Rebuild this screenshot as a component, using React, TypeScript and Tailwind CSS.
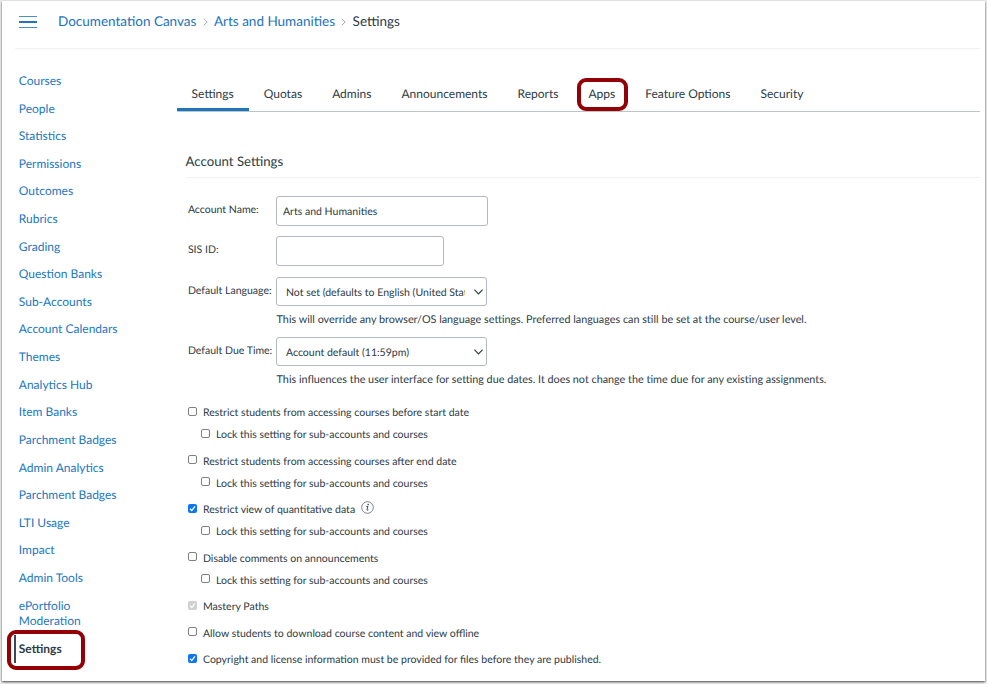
import { Fragment } from 'react';

import clsx from 'clsx';

const crumbs = ['Documentation Canvas', 'Arts and Humanities'];

const navItems = [
    'Courses',
    'People',
    'Statistics',
    'Permissions',
    'Outcomes',
    'Rubrics',
    'Grading',
    'Question Banks',
    'Sub-Accounts',
    'Account Calendars',
    'Themes',
    'Analytics Hub',
    'Item Banks',
    'Parchment Badges',
    'Admin Analytics',
    'Parchment Badges',
    'LTI Usage',
    'Impact',
    'Admin Tools',
    'ePortfolio Moderation',
    'Settings',
];

const tabs = [
    'Settings',
    'Quotas',
    'Admins',
    'Announcements',
    'Reports',
    'Apps',
    'Feature Options',
    'Security',
];

interface Option {
    label: string;
    checked?: boolean;
    disabled?: boolean;
    info?: boolean;
    lockable?: boolean;
}

const options: Option[] = [
    { label: 'Restrict students from accessing courses before start date', lockable: true },
    { label: 'Restrict students from accessing courses after end date', lockable: true },
    { label: 'Restrict view of quantitative data', checked: true, info: true, lockable: true },
    { label: 'Disable comments on announcements', lockable: true },
    { label: 'Mastery Paths', checked: true, disabled: true },
    { label: 'Allow students to download course content and view offline' },
    {
        label: 'Copyright and license information must be provided for files before they are published.',
        checked: true,
    },
];

function Checkbox({ checked, disabled }: { checked?: boolean; disabled?: boolean }) {
    return (
        <span
            className={clsx(
                'mb-[2px] flex size-[9px] shrink-0 items-center justify-center rounded-[2px]',
                !checked && 'border border-[#808080] bg-white',
                checked && !disabled && 'bg-[#0a75f5]',
                checked && disabled && 'bg-[#cfcfcf]'
            )}
        >
            {checked && (
                <svg viewBox="0 0 9 9" className="size-[9px]" fill="none">
                    <path d="M2 4.8 L3.8 6.6 L7 2.3" stroke="white" strokeWidth="1.3" />
                </svg>
            )}
        </span>
    );
}

function InfoIcon() {
    return (
        <svg viewBox="0 0 13 13" className="mb-[4px] ml-[6px] size-[13px]" fill="none">
            <circle cx="6.5" cy="6.5" r="5.8" stroke="#5a6670" strokeWidth="0.8" />
            <circle cx="7.2" cy="3.6" r="0.75" fill="#2d3b45" />
            <path
                d="M5.3 5.6 L6.9 5.3 L6 8.9 Q5.9 9.7 7.4 8.8"
                stroke="#2d3b45"
                strokeWidth="0.9"
            />
        </svg>
    );
}

function Row({ label, children }: { label: string; children: React.ReactNode }) {
    return (
        <div className="flex">
            <div className="w-[88.1px] shrink-0 pt-[7px] leading-[14px] whitespace-nowrap">{label}</div>
            {children}
        </div>
    );
}

function Select({ value }: { value: string }) {
    return (
        <div className="flex h-[29px] w-[211px] items-center rounded-[3px] border border-[#b3b9bf] pr-[3px] pl-[9px]">
            <span className="w-[179px] shrink-0 overflow-hidden pt-[4px] whitespace-nowrap">{value}</span>
            <svg viewBox="0 0 9 6" className="ml-auto h-[6px] w-[9px]" fill="none">
                <path d="M0.4 0.6 L4.5 4.9 L8.6 0.6" stroke="#2d3b45" strokeWidth="1.1" />
            </svg>
        </div>
    );
}

export default function App() {
    return (
        <div className="h-[684px] w-[987px] overflow-hidden bg-[#ececec] pt-px pl-[2px] font-['Lato',sans-serif] text-[10.53px] text-[#2d3b45] [text-rendering:geometricPrecision]">
            <div className="h-[680px] w-[983px] bg-white shadow-[0_1px_2px_rgba(0,0,0,0.7)]">
                <header className="ml-[13px] flex h-[48px] w-[965px] items-center border-b border-[#f0f1f2] pb-[7px] pl-[4px] text-[13.5px]">
                    <div className="mt-[2px] mr-[21px] flex w-[18px] flex-col gap-[4.3px]">
                        <span className="h-[1.4px] bg-[#4a8fcb]" />
                        <span className="h-[1.4px] bg-[#2573b8]" />
                        <span className="h-[1.4px] bg-[#4a8fcb]" />
                    </div>
                    {crumbs.map((crumb) => (
                        <Fragment key={crumb}>
                            <a className="text-[#1c72bd]">{crumb}</a>
                            <svg viewBox="0 0 5 8" className="mx-[6.3px] mt-[2px] h-[8px] w-[5px]" fill="none">
                                <path d="M0.7 0.7 L4.2 4 L0.7 7.3" stroke="#98a0a6" strokeWidth="0.9" />
                            </svg>
                        </Fragment>
                    ))}
                    <span>Settings</span>
                </header>

                <div className="flex">
                    <nav className="w-[174.6px] shrink-0 pt-[18px] pl-[12px] text-[12px]">
                        {navItems.map((item, index) => (
                            <div
                                key={index}
                                className={clsx(
                                    'relative w-[110px] py-[6px] pl-[4.8px] leading-[15.61px]',
                                    item === 'Settings' ? 'font-bold' : 'text-[#2277bf]'
                                )}
                            >
                                <span className="block w-[104px]">{item}</span>
                                {item === 'Settings' && (
                                    <>
                                        <span className="absolute top-0 left-0 h-[28px] w-[2px] bg-[#3c4852]" />
                                        <span className="absolute -top-[5px] -left-[7px] h-[40px] w-[78px] rounded-[9px] border-4 border-[#930006]" />
                                    </>
                                )}
                            </div>
                        ))}
                    </nav>

                    <main className="w-[803.4px] pt-[27px]">
                        <div className="flex h-[36px] border-b border-[#bfc4c8] text-[12px]">
                            {tabs.map((tab, index) => (
                                <div
                                    key={tab}
                                    className={clsx(
                                        'relative h-[35px] px-[15.02px] pt-[9px] leading-[17px]',
                                        index === 0 && 'border-b-3 border-[#1f76bd]'
                                    )}
                                >
                                    {tab}
                                    {tab === 'Apps' && (
                                        <span className="absolute top-[2px] left-[3.6px] h-[33px] w-[51px] rounded-[9px] border-4 border-[#930006]" />
                                    )}
                                </div>
                            ))}
                        </div>

                        <section className="pl-[9px]">
                            <h2 className="h-[66px] border-b border-[#f0f1f2] pt-[40px] text-[13.2px] leading-[18px]">
                                Account Settings
                            </h2>

                            <div className="pt-[18px] pl-[2.3px]">
                                <Row label="Account Name:">
                                    <div className="flex h-[30px] w-[212px] items-center rounded-[3px] border border-[#b3b9bf] px-[6px] pt-[3px]">
                                        Arts and Humanities
                                    </div>
                                </Row>
                                <div className="h-[10px]" />
                                <Row label="SIS ID:">
                                    <div className="h-[30px] w-[168px] rounded-[3px] border border-[#b3b9bf]" />
                                </Row>
                                <div className="h-[11px]" />
                                <Row label="Default Language:">
                                    <div>
                                        <Select value="Not set (defaults to English (United States))" />
                                        <p className="pt-[6px] pl-[0.6px] text-[10.8px] leading-[16px]">
                                            This will override any browser/OS language settings. Preferred
                                            languages can still be set at the course/user level.
                                        </p>
                                    </div>
                                </Row>
                                <div className="h-[9px]" />
                                <Row label="Default Due Time:">
                                    <div>
                                        <Select value="Account default (11:59pm)" />
                                        <p className="pt-[6px] pl-[0.6px] text-[10.8px] leading-[16px]">
                                            This influences the user interface for setting due dates. It does
                                            not change the time due for any existing assignments.
                                        </p>
                                    </div>
                                </Row>
                            </div>

                            <div className="pt-[16.4px] pl-[2.2px] leading-[16px]">
                                {options.map((option) => (
                                    <div key={option.label} className="mb-[10.5px]">
                                        <div className="flex h-[16px] items-center">
                                            <Checkbox checked={option.checked} disabled={option.disabled} />
                                            <span className="pt-[2px] pl-[6.2px]">{option.label}</span>
                                            {option.info && <InfoIcon />}
                                        </div>
                                        {option.lockable && (
                                            <div className="mt-[6px] flex h-[16px] items-center pl-[13px]">
                                                <Checkbox />
                                                <span className="pt-[2px] pl-[6.2px]">
                                                    Lock this setting for sub-accounts and courses
                                                </span>
                                            </div>
                                        )}
                                    </div>
                                ))}
                            </div>
                        </section>
                    </main>
                </div>
            </div>
        </div>
    );
}
